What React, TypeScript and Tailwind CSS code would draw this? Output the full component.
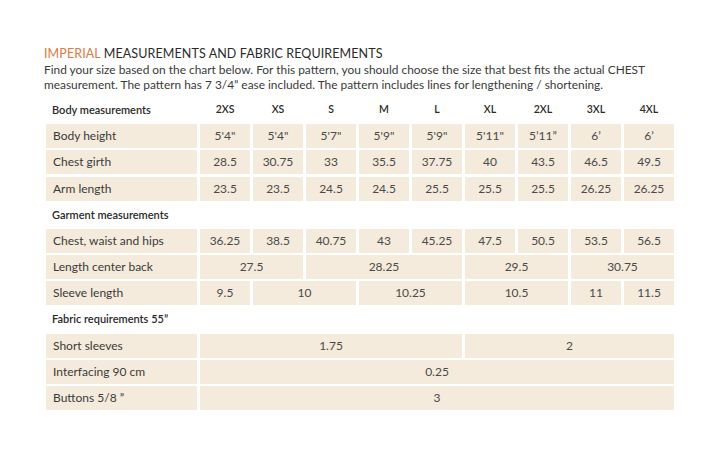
import React from 'react';

const sizes = ['2XS', 'XS', 'S', 'M', 'L', 'XL', '2XL', '3XL', '4XL'];

type Val = [string, number];

const spanClass: Record<number, string> = {
  1: 'col-span-1',
  2: 'col-span-2',
  3: 'col-span-3',
  4: 'col-span-4',
  5: 'col-span-5',
  9: 'col-span-9',
};

interface RowProps {
  label: string;
  values: Val[];
}

const Row: React.FC<RowProps> = ({ label, values }) => (
  <>
    <div className="bg-[#f5ebdc] flex items-center pl-[7px] text-[12px] text-[#3a3a3a]">{label}</div>
    {values.map(([v, span], i) => (
      <div
        key={i}
        className={`bg-[#f5ebdc] flex items-center justify-center text-[12px] text-[#4a4a4a] ${spanClass[span]}`}
      >
        {v}
      </div>
    ))}
  </>
);

const Section: React.FC<{ title: string; sizeHeads?: boolean }> = ({ title, sizeHeads }) => (
  <>
    <div className={`flex items-center pl-[6px] text-[11px] font-semibold text-[#2a2a2a] ${sizeHeads ? '' : 'col-span-10'}`}>
      {title}
    </div>
    {sizeHeads &&
      sizes.map((s) => (
        <div key={s} className="flex items-center justify-center text-[10.5px] font-semibold text-[#2a2a2a]">
          {s}
        </div>
      ))}
  </>
);

export default function App() {
  const one = (xs: string[]): Val[] => xs.map((x) => [x, 1]);

  return (
    <div className="w-[720px] h-[474px] bg-white pl-[44px] pt-[45px] font-['Lato',sans-serif]">
      <h1 className="text-[12.5px] leading-[17px] text-[#2b2b2b] tracking-[0.1px]">
        <span className="text-[#e07a45]">IMPERIAL</span> MEASUREMENTS AND FABRIC REQUIREMENTS
      </h1>
      <p className="text-[11.9px] leading-[15px] text-[#3a3a3a] w-[640px]">
        Find your size based on the chart below. For this pattern, you should choose the size that best fits the actual CHEST
        measurement. The pattern has 7 3/4” ease included. The pattern includes lines for lengthening / shortening.
      </p>

      <div className="ml-[2px] mt-[6px] grid grid-cols-[151px_repeat(9,50px)] auto-rows-[24px] gap-x-[3px] gap-y-[2.2px]">
        <Section title="Body measurements" sizeHeads />
        <Row label="Body height" values={one(['5\'4"', '5\'4"', '5\'7"', '5\'9"', '5\'9"', '5\'11"', '5\u201911\u201d', '6\u2019', '6\u2019'])} />
        <Row label="Chest girth" values={one(['28.5', '30.75', '33', '35.5', '37.75', '40', '43.5', '46.5', '49.5'])} />
        <Row label="Arm length" values={one(['23.5', '23.5', '24.5', '24.5', '25.5', '25.5', '25.5', '26.25', '26.25'])} />

        <Section title="Garment measurements" />
        <Row label="Chest, waist and hips" values={one(['36.25', '38.5', '40.75', '43', '45.25', '47.5', '50.5', '53.5', '56.5'])} />
        <Row label="Length center back" values={[['27.5', 2], ['28.25', 3], ['29.5', 2], ['30.75', 2]]} />
        <Row label="Sleeve length" values={[['9.5', 1], ['10', 2], ['10.25', 2], ['10.5', 2], ['11', 1], ['11.5', 1]]} />

        <Section title="Fabric requirements 55”" />
        <Row label="Short sleeves" values={[['1.75', 5], ['2', 4]]} />
        <Row label="Interfacing 90 cm" values={[['0.25', 9]]} />
        <Row label="Buttons 5/8 ”" values={[['3', 9]]} />
      </div>
    </div>
  );
}
